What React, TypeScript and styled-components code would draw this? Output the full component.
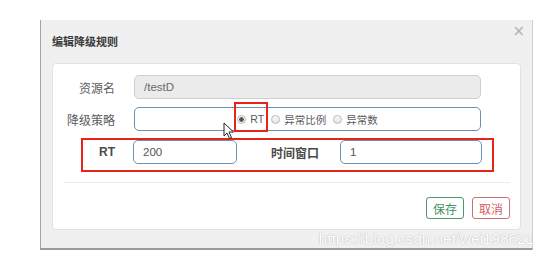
import React from 'react';
import styled, { createGlobalStyle } from 'styled-components';

const GlobalStyle = createGlobalStyle`
  html, body {
    margin: 0;
    padding: 0;
    background: #ffffff;
  }
  body {
    font-family: "Liberation Sans", "Noto Sans CJK SC", Arial, sans-serif;
  }
`;

const Page = styled.div`
  position: relative;
  width: 542px;
  height: 255px;
  padding: 20px 0 0 40px;
  box-sizing: border-box;
  overflow: hidden;
`;

const Dialog = styled.div`
  position: relative;
  width: 493px;
  height: 230px;
  box-sizing: border-box;
  background: #f0f0f0;
  border-left: 1px solid #a3a3a3;
  border-right: 1px solid #d0d0d0;
  border-bottom: 2px solid #9a9a9a;
`;

const Header = styled.div`
  display: flex;
  align-items: center;
  height: 43px;
  padding: 0 0 2px 11px;
  box-sizing: border-box;
`;

const Title = styled.h4`
  margin: 0;
  font-size: 11px;
  font-weight: 600;
  color: #3a3a3a;
  font-family: "Noto Sans CJK SC", sans-serif;
`;

const Close = styled.span`
  position: absolute;
  top: 4px;
  right: 7px;
  font-size: 15px;
  line-height: 15px;
  color: #b0b0b0;
  font-family: "DejaVu Sans", sans-serif;
`;

const Panel = styled.div`
  margin: 0 11px;
  height: 167px;
  box-sizing: border-box;
  background: #ffffff;
  border: 1px solid #e2e2e2;
  border-radius: 4px;
  padding: 11px 0 0;
  display: flex;
  flex-direction: column;
`;

const Row = styled.div<{ $gap?: number }>`
  display: flex;
  align-items: center;
  height: 24px;
  margin-top: ${({ $gap }) => $gap ?? 0}px;
`;

const Label = styled.label<{ $width: number; $space: number; $bold?: boolean }>`
  width: ${({ $width }) => $width}px;
  margin-right: ${({ $space }) => $space}px;
  text-align: right;
  font-size: 12px;
  font-weight: ${({ $bold }) => ($bold ? 700 : 400)};
  color: ${({ $bold }) => ($bold ? '#4a4a4a' : '#5c5c5c')};
  font-family: "Liberation Sans", "Noto Sans CJK SC", sans-serif;
  flex-shrink: 0;
`;

const Field = styled.div<{ $width: number; $disabled?: boolean }>`
  width: ${({ $width }) => $width}px;
  height: 24px;
  box-sizing: border-box;
  padding: 0 9px;
  display: flex;
  align-items: center;
  border-radius: 5px;
  border: 1px solid ${({ $disabled }) => ($disabled ? '#cfcfcf' : '#6f8fae')};
  background: ${({ $disabled }) => ($disabled ? '#ebebeb' : '#ffffff')};
  font-size: 11.5px;
  color: ${({ $disabled }) => ($disabled ? '#6a6a6a' : '#555555')};
  font-family: "Liberation Sans", sans-serif;
`;

const RadioGroup = styled(Field)`
  justify-content: center;
  gap: 7px;
`;

const RadioItem = styled.span`
  display: inline-flex;
  align-items: center;
  gap: 4px;
  font-size: 10.5px;
  color: #5a5a5a;
  font-family: "Liberation Sans", "Noto Sans CJK SC", sans-serif;
`;

const RadioDot = styled.span<{ $checked?: boolean }>`
  width: 9px;
  height: 9px;
  box-sizing: border-box;
  border-radius: 50%;
  border: 1px solid #b8b8b8;
  background: ${({ $checked }) =>
    $checked ? 'radial-gradient(circle, #555 0 2px, #f3f3f3 2.5px)' : 'linear-gradient(#fafafa, #e6e6e6)'};
`;

const Divider = styled.div`
  margin: 18px 10px 0;
  height: 1px;
  background: #ececec;
`;

const Footer = styled.div`
  display: flex;
  justify-content: flex-end;
  gap: 8px;
  margin: 14px 10px 0;
`;

const Button = styled.button<{ $tone: 'save' | 'cancel' }>`
  width: 38px;
  height: 22px;
  padding: 0;
  box-sizing: border-box;
  border-radius: 3px;
  background: #ffffff;
  font-size: 12px;
  font-family: "Noto Sans CJK SC", sans-serif;
  border: 1px solid ${({ $tone }) => ($tone === 'save' ? '#4c9a68' : '#cf7070')};
  color: ${({ $tone }) => ($tone === 'save' ? '#3f9360' : '#d35b5b')};
`;

const Watermark = styled.span`
  position: absolute;
  right: -2px;
  bottom: 0px;
  font-size: 15.3px;
  font-family: "Liberation Sans", Arial, sans-serif;
  color: #ffffff;
  text-shadow: 0 0 1px #bcbcbc, 0 0 1px #bcbcbc;
  white-space: nowrap;
  line-height: 18px;
`;

const Annotation = styled.div<{ $x: number; $y: number; $w: number; $h: number }>`
  position: absolute;
  left: ${({ $x }) => $x}px;
  top: ${({ $y }) => $y}px;
  width: ${({ $w }) => $w}px;
  height: ${({ $h }) => $h}px;
  box-sizing: border-box;
  border: 2px solid #e8231a;
  pointer-events: none;
`;

const Cursor = styled.svg`
  position: absolute;
  left: 223px;
  top: 122px;
`;

const options = [
  { label: 'RT', checked: true },
  { label: '异常比例' },
  { label: '异常数' },
];

export default function App() {
  return (
    <>
      <GlobalStyle />
      <Page>
        <Dialog>
          <Header>
            <Title>编辑降级规则</Title>
          </Header>
          <Close>×</Close>
          <Panel>
            <Row>
              <Label $width={62} $space={19}>资源名</Label>
              <Field $width={347} $disabled>/testD</Field>
            </Row>
            <Row $gap={8}>
              <Label $width={62} $space={19}>降级策略</Label>
              <RadioGroup $width={347}>
                {options.map((o) => (
                  <RadioItem key={o.label}>
                    <RadioDot $checked={o.checked} />
                    {o.label}
                  </RadioItem>
                ))}
              </RadioGroup>
            </Row>
            <Row $gap={9}>
              <Label $width={62} $space={18} $bold>RT</Label>
              <Field $width={104}>200</Field>
              <Label $width={82} $space={21} $bold>时间窗口</Label>
              <Field $width={142}>1</Field>
            </Row>
            <Divider />
            <Footer>
              <Button $tone="save">保存</Button>
              <Button $tone="cancel">取消</Button>
            </Footer>
          </Panel>
          <Watermark>https://blog.csdn.net/wei198621</Watermark>
        </Dialog>
        <Annotation $x={234} $y={102} $w={34} $h={30} />
        <Annotation $x={81} $y={138} $w={413} $h={34} />
        <Cursor width="12" height="18" viewBox="0 0 12 18">
          <path d="M1 1 L1 14 L4 11 L6.5 16.5 L8.5 15.5 L6 10 L10.5 10 Z" fill="#fff" stroke="#222" strokeWidth="1" strokeLinejoin="round" />
        </Cursor>
      </Page>
    </>
  );
}
